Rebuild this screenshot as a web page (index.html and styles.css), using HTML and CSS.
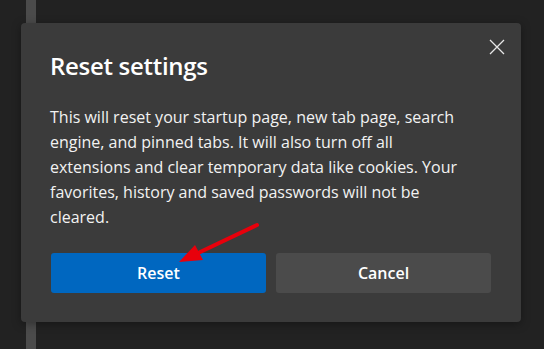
FILE: index.html
```html
<!DOCTYPE html>
<html lang="en">
<head>
  <meta charset="UTF-8" />
  <title>Reset settings</title>
  <link rel="stylesheet" href="styles.css">
</head>
<body>
  <div class="page">
    <div class="scroll-bar"></div>

    <div class="dialog">
      <button class="close" aria-label="Close">
        <svg width="16" height="16" viewBox="0 0 16 16">
          <path d="M1 1 L15 15 M15 1 L1 15" stroke="#e6e6e6" stroke-width="1.3" fill="none" />
        </svg>
      </button>

      <h2 class="title">Reset settings</h2>
      <p class="body">This will reset your startup page, new tab page, search engine, and pinned tabs. It will also turn off all extensions and clear temporary data like cookies. Your favorites, history and saved passwords will not be cleared.</p>

      <div class="actions">
        <button class="btn primary">Reset</button>
        <button class="btn">Cancel</button>
      </div>
    </div>

    <!-- annotation arrow pointing at Reset -->
    <svg class="arrow" width="544" height="349" viewBox="0 0 544 349">
      <line x1="257" y1="225" x2="196" y2="254" stroke="#e8000b" stroke-width="4" stroke-linecap="round" />
      <polygon points="179,262 195,245 203,260" fill="#e8000b" />
    </svg>
  </div>
</body>
</html>
```

FILE: styles.css
```css
* { margin: 0; padding: 0; box-sizing: border-box; }

body {
  font-family: "Open Sans", "Noto Sans", sans-serif;
  background: #222222;
  width: 544px;
  height: 349px;
  overflow: hidden;
}

.page {
  position: relative;
  height: 349px;
  padding: 23px 0 0 21px;
}

.scroll-bar {
  position: absolute;
  left: 26px;
  top: 0;
  width: 10px;
  height: 349px;
  background: #4b4b4b;
}

.dialog {
  position: relative;
  width: 500px;
  height: 299px;
  background: #3b3b3b;
  border-radius: 4px;
  box-shadow: 0 2px 10px rgba(0, 0, 0, 0.35);
  padding: 27px 30px 30px 30px;
  color: #ffffff;
}

.close {
  position: absolute;
  top: 16px;
  right: 16px;
  width: 16px;
  height: 16px;
  border: none;
  background: none;
  display: flex;
}

.title {
  font-size: 24px;
  font-weight: 600;
  line-height: 32px;
  letter-spacing: -0.3px;
  margin-left: -1px;
}

.body {
  margin-top: 23px;
  max-width: 422px;
  font-size: 16px;
  line-height: 25px;
  color: #f2f2f2;
  margin-left: -1px;
}

.actions {
  display: flex;
  gap: 10px;
  margin-top: 23px;
}

.btn {
  flex: 1;
  height: 40px;
  border: none;
  border-radius: 3px;
  background: #4b4b4b;
  color: #ffffff;
  font-family: "Open Sans", "Noto Sans", sans-serif;
  font-size: 16px;
  font-weight: 600;
}

.btn.primary {
  background: #0067c0;
}

.arrow {
  position: absolute;
  left: 0;
  top: 0;
  pointer-events: none;
}
```
